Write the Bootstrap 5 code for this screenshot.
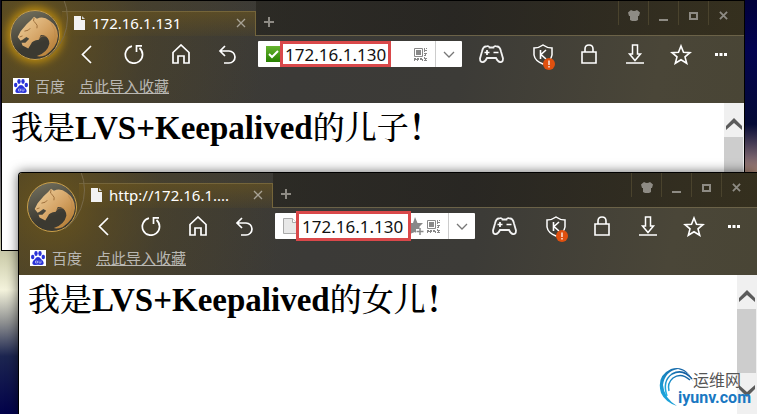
<!DOCTYPE html>
<html lang="zh-CN">
<head>
<meta charset="utf-8">
<meta name="viewport" content="width=device-width, initial-scale=1">
<title>LVS+Keepalived</title>
<link href="https://cdn.jsdelivr.net/npm/bootstrap@5.3.0/dist/css/bootstrap.min.css" rel="stylesheet">
<style>
body{font-family:"Noto Sans","Noto Sans CJK SC",sans-serif;line-height:1.25}
svg{display:block;flex:none}
button{background:none;border:0;padding:0;color:inherit}
.desktop{min-height:100vh;background:
  linear-gradient(180deg,#100d20 0,#171236 30%,#cfcfae 62%,#f4f3dc 70%,#8d8f90 78%,#1c2550 86%,#02024a 100%) left/19px 100% no-repeat,
  linear-gradient(180deg,#01013a 0,#020250 12%,#050a35 30%,#75606a 38%,#b08b78 42%) right/40px 100% no-repeat,#000}
.win{background:#fff;border:1px solid #000;overflow:hidden}
.win-a{top:0;left:1px;right:12px;height:251px}
.win-b{top:172px;left:18px;right:0;bottom:0;border-right:0;border-bottom:0;border-radius:4px 0 0 0;box-shadow:0 0 12px rgba(0,0,0,.6)}
.chrome{color:#fff;background:
  radial-gradient(circle at 34px 34px,rgba(130,98,14,.6) 0,rgba(112,86,20,.45) 48px,rgba(90,74,30,.25) 110px,transparent 230px),
  linear-gradient(100deg,#423e31 0,#3b3a37 40%,#3c3b37 62%,#4a4638 88%,#494535 100%)}
.logo-col{width:60px}
.logo{width:50px;height:50px;margin:9px 0 0 8px;border-radius:50%;background:linear-gradient(160deg,#777461,#3b3931 65%);border:1px solid #c99f4a}
.win-a .logo{box-shadow:0 0 8px 3px #b98a10}
.ring{left:-32px;top:-32px;width:98px;height:98px;border-radius:50%;border:1px solid #77694a;clip-path:inset(30px 0 10px 55px)}
.tabs{height:34px}
.tab{width:194px;height:25px;margin-top:10px;padding:0 9px 2px 12px;border:1px solid #75653a;border-width:1px 1px 0 0;font-size:15px;background:linear-gradient(180deg,rgba(112,88,28,.55),rgba(96,78,30,.15))}
.tab-text{margin-left:7px;flex:1}
.strip{background:linear-gradient(90deg,rgba(36,34,28,.65),rgba(36,34,30,.8) 40%,rgba(44,38,20,.7));border-bottom:1px solid #6b6248;height:35px;color:#8e8b84}
.sysbtn{width:30px;height:24px;border-left:1px solid #4a432d;display:flex;align-items:center;justify-content:center;padding-top:5px}
.syskeys{margin-right:6px}
.tools{height:38px}
.tool{width:47px;display:flex;justify-content:center;align-items:center}
.tool-r{width:46px;display:flex;justify-content:center;align-items:center;position:relative}
.tool-pad{width:58px}
.tool-more{width:33px;margin-right:7px}
.alert-dot{left:23px;top:14px}
.address{height:26px;margin-left:7px;background:#fff;border-radius:1px;color:#777}
.tools .tool:first-child{margin-left:1px}
.url{height:26px;border:3px solid #d9484a;color:#111;font-size:17px;padding:0 2px;outline:0;border-radius:0;background:#fff;line-height:20px}
.url-a{width:111px}
.url-b{width:115px;height:30px;padding:0 3px;z-index:1}
.drop{width:27px;height:26px;border-left:1px solid #ccc;display:flex;align-items:center;justify-content:center}
.marks{height:30px;font-size:15px;padding:0 0 4px 11px;color:#b9b7b2}
.marks a{color:#b9b7b2}
.paw{margin-right:6px}
.site{margin-right:14px}
.page{font-family:"Liberation Serif","Noto Serif CJK SC","Noto Sans CJK SC",serif;color:#000}
.headline{font-size:33px;line-height:38px;font-weight:700;margin:6px 0 0 9px;white-space:nowrap}
.headline span{font-size:32px;font-weight:500}
.scroll{width:20px;background:#f0f0f0;color:#555}
.arrow{height:34px;display:flex;justify-content:center;align-items:flex-start;padding-top:15px}
.thumb{background:#cdcdcd;margin-right:1px}
.thumb-b{height:64px}
.brand-mark{right:6px;bottom:7px}
.brand-cn{font-family:"Noto Sans CJK SC",sans-serif;font-size:16px;line-height:20px;color:#555;margin-right:10px}
.brand-en{font-family:Roboto,"Liberation Sans",sans-serif;font-weight:700;font-size:16px;line-height:18px;color:#1a78c2}
.swirl{margin-right:-17px}
</style>
<script src="https://cdn.jsdelivr.net/npm/bootstrap@5.3.0/dist/js/bootstrap.bundle.min.js"></script>
</head>
<body>
<svg width="0" height="0" class="position-absolute" aria-hidden="true">
<defs>
<linearGradient id="fur" x1="0" y1="0" x2="1" y2="1"><stop offset="0" stop-color="#f0d3a0"/><stop offset=".5" stop-color="#d5a466"/><stop offset="1" stop-color="#ad7428"/></linearGradient>
<linearGradient id="green" x1="0" y1="0" x2="0" y2="1"><stop offset="0" stop-color="#67b530"/><stop offset="1" stop-color="#278000"/></linearGradient>
<linearGradient id="blue" x1="0" y1="1" x2="1" y2="0"><stop offset="0" stop-color="#1fb6ea"/><stop offset="1" stop-color="#124f94"/></linearGradient>
<symbol id="cat" viewBox="0 0 50 50"><path fill="url(#fur)" d="M16.500 13.500 21 9.500 24 6 27 8Q34 5 40 10 49 16 49 26 48 38 36 46 30 48 27 47 38 43 40 34 40 28 34 25L31 25 29 30Q22 31 21 34L18 39 12 36 11 33 15 33 19 29 16 27 12 30 10 31 7 27 10 21Z"/><path fill="none" stroke="#8a5c2a" stroke-width=".8" d="M24 7Q22 11 26 13q2 2 1 5M14 21l4-1 2-2M9 27l3-1"/><path fill="none" stroke="#b98549" stroke-width=".6" d="M42 13Q47 19 46 27T38 43M29 29q4-5 9-2"/></symbol>
<symbol id="doc" viewBox="0 0 11 14"><path fill="#f2f2f2" d="M0 0h7v4h4v10H0z"/><path fill="#cfcfcf" d="M8 0l3 3H8z"/></symbol>
<symbol id="times" viewBox="0 0 10 10"><path d="M1 1l8 8M9 1l-8 8" stroke="currentColor" stroke-width="1.300"/></symbol>
<symbol id="shut" viewBox="0 0 10 10"><path d="M1 1l8 8M9 1l-8 8" stroke="currentColor" stroke-width="2"/></symbol>
<symbol id="plus" viewBox="0 0 10 10"><path d="M5 0v10M0 5h10" stroke="currentColor" stroke-width="2"/></symbol>
<symbol id="shirt" viewBox="0 0 12 11"><path fill="currentColor" d="M3 0q3 2 6 0l3 2.500-1 3.500H10v4l-2 1H4L2 10V6H1L0 2.500z"/></symbol>
<symbol id="back" viewBox="0 0 11 19"><path d="M10 1 1.500 9.500 10 18" fill="none" stroke="#fff" stroke-width="1.700"/></symbol>
<symbol id="reload" viewBox="0 0 20 20"><path d="M8 2.200A8.600 8.600 0 1 0 15.500 4" fill="none" stroke="#fff" stroke-width="1.700"/><path d="M18 1.800H12.500V8" fill="none" stroke="#fff" stroke-width="1.700"/></symbol>
<symbol id="home" viewBox="0 0 18 20"><path d="M1 8.500 9 1l8 7.500V19h-5v-7H6v7H1z" fill="none" stroke="#fff" stroke-width="1.700"/></symbol>
<symbol id="undo" viewBox="0 0 19 19"><path d="M7 1 2 6l5 5M2 6h9a6 6 0 0 1 0 12H6" fill="none" stroke="#fff" stroke-width="1.700"/></symbol>
<symbol id="pad" viewBox="0 0 25 18"><path d="M7 1.500Q10 .5 10.500 2.500h4Q15 .5 18 1.500q3 0 4 5l2 7q0 4-3 3.500-2 0-4-4H8q-2 4-4 4-3 .5-3-3.500l2-7q1-5 4-5z" fill="none" stroke="#f2f2f2" stroke-width="1.800"/><path d="M5.500 7.500h5M8 5v5M14.500 7.500h5" stroke="#fff" stroke-width="1.700"/></symbol>
<symbol id="shield" viewBox="0 0 20 21"><path d="M10 1q4 3 9 3v7q-1 6-9 9-8-3-9-9V4q5 0 9-3z" fill="none" stroke="#fff" stroke-width="1.500"/><path d="M7.500 6v9M13 6l-5 4.500L13 15" fill="none" stroke="#fff" stroke-width="1.600"/></symbol>
<symbol id="warn" viewBox="0 0 12 12"><circle cx="6" cy="6" r="6" fill="#e0500f"/><path d="M6 2.500v4.500M6 8v1.500" stroke="#fff" stroke-width="1.300"/></symbol>
<symbol id="lock" viewBox="0 0 16 20"><path d="M1 8h14v11H1zM4 8V5q0-4 4-4t4 4v3" fill="none" stroke="#fff" stroke-width="1.600"/></symbol>
<symbol id="down" viewBox="0 0 18 20"><path d="M6.500 1h5v9h3L9 16.500 3.500 10h3zM0 19h18" fill="none" stroke="#fff" stroke-width="1.500"/></symbol>
<symbol id="star" viewBox="0 0 22 21"><path d="M11 2l2.500 6.300 6.500.3-5 4.300 1.700 6.400L11 15.700l-5.700 3.600L7 12.900 2 8.600l6.500-.3z" fill="none" stroke="#fff" stroke-width="1.600"/></symbol>
<symbol id="more" viewBox="0 0 12 3"><path d="M0 0h3v3H0zM4.500 0h3v3h-3zM9 0h3v3H9z" fill="#fff"/></symbol>
<symbol id="qr" viewBox="0 0 13 13"><path d="M.5.500h8v8h-8z" fill="none" stroke="#888"/><path d="M2 2h5v5H2zM10 0h1v2h2v1h-2v1h-1zM12 0h1v1h-1zM10 5h3v1h-1v2h-2V7h1V6h-1zM0 10h2v1h1v-1h2v2H4v1H3v-1H1v1H0zM6 10h2v1h1v2H8v-1H6zM10 9h1v1h2v1h-1v2h-2v-1h1v-1h-1zM12 12h1v1h-1z" fill="#888"/></symbol>
<symbol id="chev" viewBox="0 0 12 7"><path d="M1 1l5 5 5-5" fill="none" stroke="#777" stroke-width="1.300"/></symbol>
<symbol id="up" viewBox="0 0 16 12"><path d="M0 8 8 0l8 8v4L8 5 0 12z" fill="#5b5b5b"/></symbol>
<symbol id="paw" viewBox="0 0 16 16"><path fill="#fff" d="M0 0h16v16H0z"/><g fill="#2932d8"><ellipse cx="2.700" cy="7" rx="1.700" ry="2.200"/><ellipse cx="6" cy="3.500" rx="1.700" ry="2.400"/><ellipse cx="10" cy="3.500" rx="1.700" ry="2.400"/><ellipse cx="13.300" cy="7" rx="1.700" ry="2.200"/><path d="M8 7q2 0 3 2l2 2q2 4-2 4-3-.7-6 0-4 0-2-4l2-2q1-2 3-2z"/></g><path d="M5.500 11h2v2h-2zM9 10.500V13h2v-2.500" fill="none" stroke="#fff" stroke-width=".5"/></symbol>
</defs>
</svg>
<main class="desktop position-relative overflow-hidden">

<section class="win win-a position-absolute d-flex flex-column">
  <header class="chrome position-relative">
    <div class="ring position-absolute"></div>
    <div class="d-flex">
      <div class="logo-col"><button class="logo" aria-label="猎豹浏览器"><svg width="48" height="48"><use href="#cat"/></svg></button></div>
      <div class="flex-grow-1">
        <div class="tabs d-flex">
          <div class="tab d-flex align-items-center"><svg width="11" height="14"><use href="#doc"/></svg><span class="tab-text">172.16.1.131</span><button aria-label="关闭标签" class="text-white-50"><svg width="10" height="10"><use href="#times"/></svg></button></div>
          <div class="strip flex-grow-1 d-flex justify-content-between">
            <button aria-label="新标签" class="ms-2 pt-2"><svg width="10" height="10"><use href="#plus"/></svg></button>
            <div class="syskeys d-flex">
              <button class="sysbtn" aria-label="皮肤"><svg width="12" height="11"><use href="#shirt"/></svg></button>
              <button class="sysbtn" aria-label="最小化"><svg width="9" height="10"><path d="M0 8h9v2H0z" fill="currentColor"/></svg></button>
              <button class="sysbtn" aria-label="最大化"><svg width="9" height="8"><path d="M1 1h7v6H1z" fill="none" stroke="currentColor" stroke-width="2"/></svg></button>
              <button class="sysbtn" aria-label="关闭"><svg width="9" height="9"><use href="#shut"/></svg></button>
            </div>
          </div>
        </div>
        <nav class="tools d-flex align-items-center">
          <button class="tool" aria-label="后退"><svg width="11" height="19"><use href="#back"/></svg></button>
          <button class="tool" aria-label="刷新"><svg width="20" height="20"><use href="#reload"/></svg></button>
          <button class="tool" aria-label="主页"><svg width="18" height="20"><use href="#home"/></svg></button>
          <button class="tool" aria-label="撤销"><svg width="19" height="19"><use href="#undo"/></svg></button>
          <div class="address flex-grow-1 d-flex align-items-center">
            <svg class="ms-2" width="14" height="16"><path d="M0 0h16v16H0z" fill="url(#green)"/><path d="M3 8l3 3 6-6" fill="none" stroke="#fff" stroke-width="2"/></svg>
            <input class="url url-a" aria-label="地址" value="172.16.1.130">
            <svg class="ms-auto me-2" width="13" height="13"><use href="#qr"/></svg>
            <button class="drop" aria-label="历史"><svg width="12" height="7"><use href="#chev"/></svg></button>
          </div>
          <button class="tool-r tool-pad" aria-label="游戏"><svg width="25" height="18"><use href="#pad"/></svg></button>
          <button class="tool-r" aria-label="安全"><svg width="20" height="21"><use href="#shield"/></svg><svg class="alert-dot position-absolute" width="12" height="12"><use href="#warn"/></svg></button>
          <button class="tool-r" aria-label="锁定"><svg width="16" height="20"><use href="#lock"/></svg></button>
          <button class="tool-r" aria-label="下载"><svg width="18" height="20"><use href="#down"/></svg></button>
          <button class="tool-r" aria-label="收藏"><svg width="22" height="21"><use href="#star"/></svg></button>
          <button class="tool-r tool-more" aria-label="更多"><svg width="12" height="3"><use href="#more"/></svg></button>
        </nav>
      </div>
    </div>
    <div class="marks d-flex align-items-center"><svg class="paw" width="16" height="16"><use href="#paw"/></svg><a href="#" class="site text-decoration-none">百度</a><a href="#">点此导入收藏</a></div>
  </header>
  <div class="page d-flex flex-grow-1">
    <h1 class="headline flex-grow-1"><span>我是</span>LVS+Keepalived<span>的儿子</span>！</h1>
    <div class="scroll d-flex flex-column"><button class="arrow" aria-label="向上"><svg width="16" height="12"><use href="#up"/></svg></button><div class="thumb flex-grow-1"></div></div>
  </div>
</section>

<section class="win win-b position-absolute d-flex flex-column">
  <header class="chrome position-relative">
    <div class="ring position-absolute"></div>
    <div class="d-flex">
      <div class="logo-col"><button class="logo" aria-label="猎豹浏览器"><svg width="48" height="48"><use href="#cat"/></svg></button></div>
      <div class="flex-grow-1">
        <div class="tabs d-flex">
          <div class="tab d-flex align-items-center"><svg width="11" height="14"><use href="#doc"/></svg><span class="tab-text">http://172.16.1....</span><button aria-label="关闭标签" class="text-white-50"><svg width="10" height="10"><use href="#times"/></svg></button></div>
          <div class="strip flex-grow-1 d-flex justify-content-between">
            <button aria-label="新标签" class="ms-2 pt-2"><svg width="10" height="10"><use href="#plus"/></svg></button>
            <div class="syskeys d-flex">
              <button class="sysbtn" aria-label="皮肤"><svg width="12" height="11"><use href="#shirt"/></svg></button>
              <button class="sysbtn" aria-label="最小化"><svg width="9" height="10"><path d="M0 8h9v2H0z" fill="currentColor"/></svg></button>
              <button class="sysbtn" aria-label="最大化"><svg width="9" height="8"><path d="M1 1h7v6H1z" fill="none" stroke="currentColor" stroke-width="2"/></svg></button>
              <button class="sysbtn" aria-label="关闭"><svg width="9" height="9"><use href="#shut"/></svg></button>
            </div>
          </div>
        </div>
        <nav class="tools d-flex align-items-center">
          <button class="tool" aria-label="后退"><svg width="11" height="19"><use href="#back"/></svg></button>
          <button class="tool" aria-label="刷新"><svg width="20" height="20"><use href="#reload"/></svg></button>
          <button class="tool" aria-label="主页"><svg width="18" height="20"><use href="#home"/></svg></button>
          <button class="tool" aria-label="撤销"><svg width="19" height="19"><use href="#undo"/></svg></button>
          <div class="address flex-grow-1 d-flex align-items-center">
            <svg class="ms-2" width="13" height="16"><path d="M.5.500h9l4 4v11H.5z" fill="#e8e8e8" stroke="#aaa"/><path d="M9.500.500v4h4" fill="#fff" stroke="#aaa"/></svg>
            <input class="url url-b" aria-label="地址" value="172.16.1.130">
            <svg width="14" height="18"><path d="M4 0l2.500 6H12L8.500 9.500V12H5v4l-1-1-5 2V6h3z" fill="#888"/><path d="M9 11v7M5.500 14.500h7" stroke="#888" stroke-width="1.500"/></svg>
            <svg class="ms-auto me-2" width="13" height="13"><use href="#qr"/></svg>
            <button class="drop" aria-label="历史"><svg width="12" height="7"><use href="#chev"/></svg></button>
          </div>
          <button class="tool-r tool-pad" aria-label="游戏"><svg width="25" height="18"><use href="#pad"/></svg></button>
          <button class="tool-r" aria-label="安全"><svg width="20" height="21"><use href="#shield"/></svg><svg class="alert-dot position-absolute" width="12" height="12"><use href="#warn"/></svg></button>
          <button class="tool-r" aria-label="锁定"><svg width="16" height="20"><use href="#lock"/></svg></button>
          <button class="tool-r" aria-label="下载"><svg width="18" height="20"><use href="#down"/></svg></button>
          <button class="tool-r" aria-label="收藏"><svg width="22" height="21"><use href="#star"/></svg></button>
          <button class="tool-r tool-more" aria-label="更多"><svg width="12" height="3"><use href="#more"/></svg></button>
        </nav>
      </div>
    </div>
    <div class="marks d-flex align-items-center"><svg class="paw" width="16" height="16"><use href="#paw"/></svg><a href="#" class="site text-decoration-none">百度</a><a href="#">点此导入收藏</a></div>
  </header>
  <div class="page d-flex flex-grow-1">
    <h1 class="headline flex-grow-1"><span>我是</span>LVS+Keepalived<span>的女儿</span>！</h1>
    <div class="scroll d-flex flex-column"><button class="arrow" aria-label="向上"><svg width="16" height="12"><use href="#up"/></svg></button><div class="thumb thumb-b"></div><button class="arrow pt-2" aria-label="向下"><svg width="16" height="16" viewBox="0 0 16 16"><path d="M0 4 8 11l8-7v4l-8 8-8-8z" fill="#5b5b5b"/></svg></button></div>
  </div>
</section>

<div class="brand-mark position-absolute d-flex align-items-end">
  <svg class="swirl" width="38" height="42" viewBox="0 0 38 42"><path fill="url(#blue)" d="M37 18Q29-1 14 4-1 11 4 28q4 9 16 13Q7 33 6 20 8 6 21 4q11 2 16 14z"/><path fill="none" stroke="url(#blue)" stroke-width="1.500" d="M35 14Q26 3 15 9 5 16 10 31M33 15Q24 7 16 13q-6 5-4 13"/></svg>
  <div class="text-end"><div class="brand-cn">运维网</div><div class="brand-en">iyunv.com</div></div>
</div>
</main>
</body>
</html>
